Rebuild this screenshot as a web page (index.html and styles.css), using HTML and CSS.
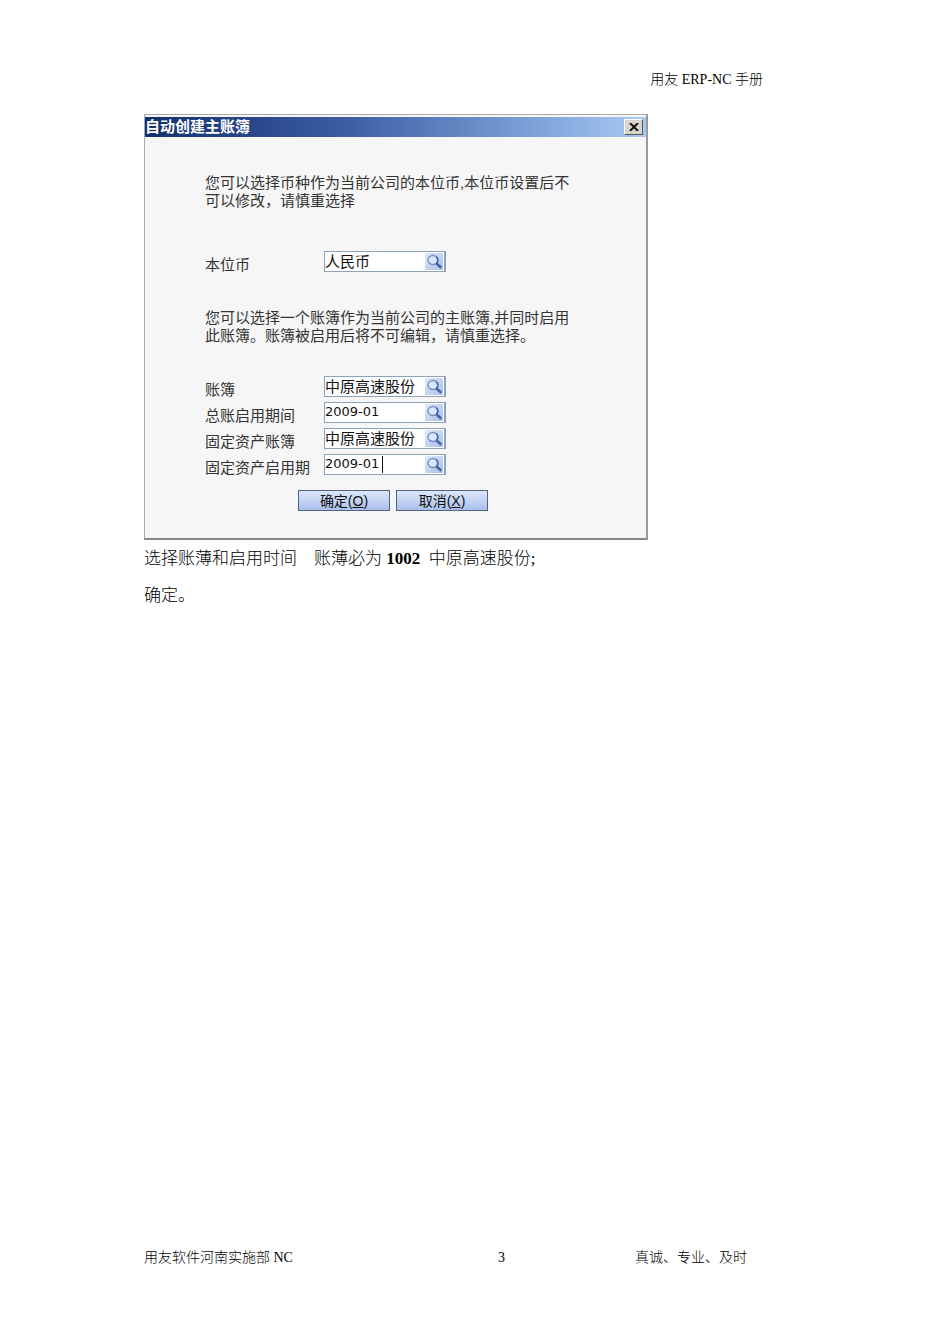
FILE: index.html
```html
<!DOCTYPE html>
<html lang="zh-CN">
<head>
  <meta charset="UTF-8" />
  <meta name="viewport" content="width=device-width, initial-scale=1.0" />
  <title>用友 ERP-NC 手册</title>
  <link rel="stylesheet" href="styles.css">
</head>
<body>

  <svg class="sprite" width="0" height="0" aria-hidden="true">
    <defs>
      <linearGradient id="tile" x1="0" y1="0" x2="1" y2="1">
        <stop offset="0" stop-color="#dfe9fb" />
        <stop offset="1" stop-color="#a9bfea" />
      </linearGradient>
    </defs>
    <symbol id="search" viewBox="0 0 18 17">
      <rect width="18" height="17" rx="1" fill="url(#tile)" />
      <path d="M11.5 10.5l4 3.5" stroke="#4262a0" stroke-width="2.6" stroke-linecap="round" />
      <ellipse cx="8" cy="7" rx="5" ry="4.5" fill="#d6e8fb" stroke="#7890bd" stroke-width="1.4" />
      <path d="M11 3.6c2.4 2 2.4 5.200 0 7" fill="none" stroke="#4668a4" stroke-width="1.6" />
    </symbol>
  </svg>

  <header class="page-header">用友 ERP-NC 手册</header>

  <main>
    <section class="dialog" role="dialog" aria-labelledby="dialog-title">
      <div class="title-bar">
        <h1 id="dialog-title">自动创建主账簿</h1>
        <button type="button" class="close" aria-label="关闭">
          <svg width="10" height="8" viewBox="0 0 10 8"><path d="M1 0l8 8M9 0L1 8" stroke="#111" stroke-width="2" /></svg>
        </button>
      </div>

      <form class="dialog-body">
        <p>您可以选择币种作为当前公司的本位币,本位币设置后不<br>可以修改，请慎重选择</p>

        <div class="fields currency-fields">
          <label for="currency">本位币</label>
          <div class="lookup">
            <input type="text" id="currency" value="人民币">
            <button type="button" aria-label="查找本位币"><svg><use href="#search" /></svg></button>
          </div>
        </div>

        <p>您可以选择一个账簿作为当前公司的主账簿,并同时启用<br>此账簿。账簿被启用后将不可编辑，请慎重选择。</p>

        <div class="fields book-fields">
          <label for="book">账簿</label>
          <div class="lookup">
            <input type="text" id="book" value="中原高速股份">
            <button type="button" aria-label="查找账簿"><svg><use href="#search" /></svg></button>
          </div>

          <label for="period">总账启用期间</label>
          <div class="lookup">
            <input type="text" id="period" class="date" value="2009-01">
            <button type="button" aria-label="查找总账启用期间"><svg><use href="#search" /></svg></button>
          </div>

          <label for="asset-book">固定资产账簿</label>
          <div class="lookup">
            <input type="text" id="asset-book" value="中原高速股份">
            <button type="button" aria-label="查找固定资产账簿"><svg><use href="#search" /></svg></button>
          </div>

          <label for="asset-period">固定资产启用期</label>
          <div class="lookup">
            <input type="text" id="asset-period" class="date" value="2009-01">
            <span class="caret"></span>
            <button type="button" aria-label="查找固定资产启用期"><svg><use href="#search" /></svg></button>
          </div>
        </div>

        <div class="actions">
          <button type="submit">确定(<u>O</u>)</button>
          <button type="button">取消(<u>X</u>)</button>
        </div>
      </form>
    </section>

    <div class="notes">
      <p>选择账薄和启用时间　账薄必为 <b>1002</b>&nbsp; 中原高速股份;</p>
      <p>确定。</p>
    </div>
  </main>

  <footer class="page-footer">
    <span>用友软件河南实施部 NC</span>
    <span>3</span>
    <span>真诚、专业、及时</span>
  </footer>

</body>
</html>
```
FILE: styles.css
```css
:root {
  --text: #333;
  --panel: #f6f6f6;
  --field-border: #8fa3b8;
}

* {
  box-sizing: border-box;
  margin: 0;
  padding: 0;
}

body {
  display: flex;
  flex-direction: column;
  min-height: 100vh;
  padding: 70px 187px 76px 144px;
  background: #fff;
  color: #000;
  font-family: "Liberation Serif", "Noto Sans CJK SC", serif;
  font-size: 14px;
  font-weight: 300;
  line-height: 20px;
}

.sprite {
  position: absolute;
}

.page-header {
  text-align: right;
  margin-bottom: 24px;
}

main {
  flex: 1;
}

/* dialog window */
.dialog {
  max-width: 504px;
  padding-top: 2px;
  background: var(--panel);
  border: 1px solid #aaa;
  border-right: 2px solid #999;
  border-bottom: 2px solid #888;
  color: var(--text);
  font-family: "Liberation Sans", "Noto Sans CJK SC", sans-serif;
  font-size: 15px;
  font-weight: 400;
  line-height: 18px;
}

.title-bar {
  display: flex;
  justify-content: space-between;
  align-items: center;
  height: 20px;
  padding-right: 3px;
  background: linear-gradient(to right, #12306f, #3d5da3 40%, #84aade 82%, #a9c9f3);
}

.title-bar h1 {
  color: #fff;
  font-size: 15px;
  line-height: 20px;
}

.close {
  display: flex;
  align-items: center;
  justify-content: center;
  width: 19px;
  height: 16px;
  background: #d8d5ce;
  border: 1px solid;
  border-color: #fff #555 #555 #fff;
}

.dialog-body {
  padding: 37px 60px 27px;
}

.dialog-body p {
  white-space: nowrap;
}

.fields {
  display: grid;
  grid-template-columns: 119px 122px;
  row-gap: 5px;
}

.currency-fields {
  margin: 41px 0 37px;
}

.book-fields {
  margin: 31px 0 15px;
}

.fields label {
  height: 21px;
  padding-top: 5px;
  white-space: nowrap;
}

.lookup {
  position: relative;
  display: flex;
  height: 21px;
  background: #fff;
  border: 1px solid var(--field-border);
  border-right-width: 2px;
}

.lookup input {
  flex: 1;
  min-width: 0;
  padding-bottom: 2px;
  border: none;
  outline: none;
  background: none;
  color: #111;
  font: 15px "Liberation Sans", "Noto Sans CJK SC", sans-serif;
}

.lookup input.date {
  font: 13px "DejaVu Sans", sans-serif;
}

.lookup button {
  width: 18px;
  height: 17px;
  margin: 1px;
  border: none;
  background: none;
}

.lookup svg {
  display: block;
  width: 18px;
  height: 17px;
}

.caret {
  position: absolute;
  left: 57px;
  top: 1px;
  width: 1px;
  height: 17px;
  background: #111;
}

.actions {
  display: flex;
  gap: 6px;
  padding-left: 93px;
}

.actions button {
  width: 92px;
  height: 21px;
  border: 1px solid #52647c;
  background: linear-gradient(#dbe6f8, #abc0ec);
  color: #111;
  font: 14px/18px "Liberation Sans", "Noto Sans CJK SC", sans-serif;
}

/* text under the dialog */
.notes {
  font-size: 17px;
  line-height: 37px;
}

.notes b {
  font-weight: 700;
}

.page-footer {
  display: grid;
  grid-template-columns: 354px 1fr 128px;
}
```
